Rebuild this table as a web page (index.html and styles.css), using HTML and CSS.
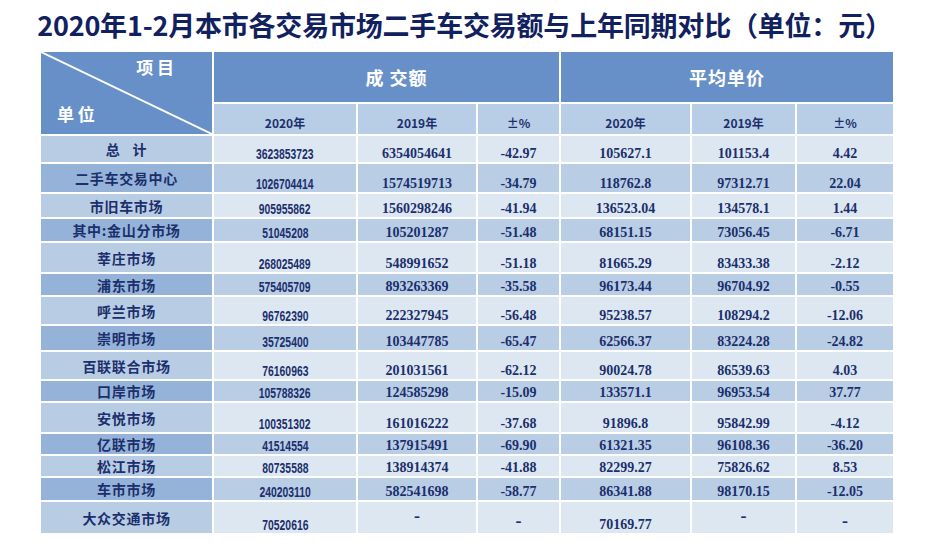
FILE: index.html
```html
<!DOCTYPE html>
<html lang="zh-CN">
<head>
<meta charset="utf-8">
<title>2020年1-2月本市各交易市场二手车交易额与上年同期对比</title>
<link rel="stylesheet" href="styles.css">
</head>
<body>
<h1 class="title">2020年1-2月本市各交易市场二手车交易额与上年同期对比（单位：元）</h1>
<div class="sheet">
  <div class="corner">
    <svg class="diag" viewBox="0 0 100 100" preserveAspectRatio="none"><line x1="0" y1="0" x2="100" y2="100" stroke="#ffffff" stroke-width="2" vector-effect="non-scaling-stroke"/></svg>
    <span class="c-top">项 目</span>
    <span class="c-bot">单 位</span>
  </div>
  <div class="hd hd-amt">成 交额</div>
  <div class="hd hd-avg">平均单价</div>
  <div class="sub">2020年</div>
  <div class="sub">2019年</div>
  <div class="sub">±%</div>
  <div class="sub">2020年</div>
  <div class="sub">2019年</div>
  <div class="sub">±%</div>

  <div class="row"><div class="lab wide">总 计</div><div class="c"><span class="amt">3623853723</span></div><div class="c">6354054641</div><div class="c">-42.97</div><div class="c">105627.1</div><div class="c">101153.4</div><div class="c">4.42</div></div>
  <div class="row alt"><div class="lab">二手车交易中心</div><div class="c"><span class="amt">1026704414</span></div><div class="c">1574519713</div><div class="c">-34.79</div><div class="c">118762.8</div><div class="c">97312.71</div><div class="c">22.04</div></div>
  <div class="row"><div class="lab">市旧车市场</div><div class="c"><span class="amt">905955862</span></div><div class="c">1560298246</div><div class="c">-41.94</div><div class="c">136523.04</div><div class="c">134578.1</div><div class="c">1.44</div></div>
  <div class="row alt"><div class="lab">其中:金山分市场</div><div class="c"><span class="amt">51045208</span></div><div class="c">105201287</div><div class="c">-51.48</div><div class="c">68151.15</div><div class="c">73056.45</div><div class="c">-6.71</div></div>
  <div class="row"><div class="lab">莘庄市场</div><div class="c"><span class="amt">268025489</span></div><div class="c">548991652</div><div class="c">-51.18</div><div class="c">81665.29</div><div class="c">83433.38</div><div class="c">-2.12</div></div>
  <div class="row alt"><div class="lab">浦东市场</div><div class="c"><span class="amt">575405709</span></div><div class="c">893263369</div><div class="c">-35.58</div><div class="c">96173.44</div><div class="c">96704.92</div><div class="c">-0.55</div></div>
  <div class="row"><div class="lab">呼兰市场</div><div class="c"><span class="amt">96762390</span></div><div class="c">222327945</div><div class="c">-56.48</div><div class="c">95238.57</div><div class="c">108294.2</div><div class="c">-12.06</div></div>
  <div class="row alt"><div class="lab">崇明市场</div><div class="c"><span class="amt">35725400</span></div><div class="c">103447785</div><div class="c">-65.47</div><div class="c">62566.37</div><div class="c">83224.28</div><div class="c">-24.82</div></div>
  <div class="row"><div class="lab">百联联合市场</div><div class="c"><span class="amt">76160963</span></div><div class="c">201031561</div><div class="c">-62.12</div><div class="c">90024.78</div><div class="c">86539.63</div><div class="c">4.03</div></div>
  <div class="row alt"><div class="lab">口岸市场</div><div class="c"><span class="amt">105788326</span></div><div class="c">124585298</div><div class="c">-15.09</div><div class="c">133571.1</div><div class="c">96953.54</div><div class="c">37.77</div></div>
  <div class="row"><div class="lab">安悦市场</div><div class="c"><span class="amt">100351302</span></div><div class="c">161016222</div><div class="c">-37.68</div><div class="c">91896.8</div><div class="c">95842.99</div><div class="c">-4.12</div></div>
  <div class="row alt"><div class="lab">亿联市场</div><div class="c"><span class="amt">41514554</span></div><div class="c">137915491</div><div class="c">-69.90</div><div class="c">61321.35</div><div class="c">96108.36</div><div class="c">-36.20</div></div>
  <div class="row"><div class="lab">松江市场</div><div class="c"><span class="amt">80735588</span></div><div class="c">138914374</div><div class="c">-41.88</div><div class="c">82299.27</div><div class="c">75826.62</div><div class="c">8.53</div></div>
  <div class="row alt"><div class="lab">车市市场</div><div class="c"><span class="amt">240203110</span></div><div class="c">582541698</div><div class="c">-58.77</div><div class="c">86341.88</div><div class="c">98170.15</div><div class="c">-12.05</div></div>
  <div class="row"><div class="lab">大众交通市场</div><div class="c"><span class="amt">70520616</span></div><div class="c dash hi">-</div><div class="c dash">-</div><div class="c">70169.77</div><div class="c dash hi">-</div><div class="c dash">-</div></div>
</div>
</body>
</html>
```

FILE: styles.css
```css
html, body {
  margin: 0;
  padding: 0;
  background: #ffffff;
}

body {
  width: 929px;
  height: 553px;
  overflow: hidden;
  font-family: "Noto Sans CJK SC", "Noto Sans", sans-serif;
  color: #1b2f6c;
}

.title {
  margin: 0;
  padding-top: 7px;
  height: 36px;
  line-height: 36px;
  font-size: 27px;
  font-weight: 700;
  letter-spacing: -0.2px;
  text-align: center;
  color: #112160;
  white-space: nowrap;
}

.sheet {
  margin: 9px 0 0 41px;
  width: 852px;
  display: grid;
  grid-template-columns: 171px 142px 118px 81px 129px 103px 96px;
  grid-template-rows: 50px 30px 26px 28px 23px 22px 29px 21px 27px 24px 27px 20px 29px 20px 20px 22px 31px;
  column-gap: 2px;
  row-gap: 2px;
}

.corner {
  grid-row: 1 / span 2;
  grid-column: 1;
  position: relative;
  background: #6890c8;
  display: flex;
  flex-direction: column;
  justify-content: space-between;
  color: #ffffff;
  font-weight: 700;
  font-size: 17px;
  line-height: 20px;
}

.diag {
  position: absolute;
  left: 0;
  top: 0;
  width: 100%;
  height: 100%;
}

.c-top {
  align-self: flex-end;
  margin: 5px 38px 0 0;
}

.c-bot {
  align-self: flex-start;
  margin: 0 0 10px 16px;
}

.hd {
  background: #6890c8;
  color: #ffffff;
  font-size: 18px;
  font-weight: 700;
  display: flex;
  align-items: center;
  justify-content: center;
  letter-spacing: 1px;
}

.hd-amt {
  grid-column: 2 / span 3;
  padding-left: 20px;
}

.hd-avg {
  grid-column: 5 / span 3;
}

.sub {
  background: #b8cde6;
  display: flex;
  align-items: center;
  justify-content: center;
  padding-top: 6px;
  box-sizing: border-box;
  font-size: 12px;
  font-weight: 700;
}

.row {
  display: contents;
}

.lab {
  background: #b8cce4;
  display: flex;
  align-items: center;
  justify-content: center;
  font-size: 14px;
  font-weight: 700;
  letter-spacing: 0.7px;
  white-space: nowrap;
}

.lab.wide {
  word-spacing: 8px;
}

.row.alt .lab {
  background: #95b3d8;
}

.c {
  background: #dde7f1;
  display: flex;
  align-items: flex-end;
  justify-content: center;
  font-family: "Liberation Serif", "Times New Roman", serif;
  font-weight: 700;
  font-size: 14px;
  line-height: 14px;
  padding-bottom: 1px;
  box-sizing: border-box;
  white-space: nowrap;
}

.row.alt .c {
  background: #b9cde5;
}

.amt {
  display: inline-block;
  font-family: "Liberation Sans", Arial, sans-serif;
  font-weight: 700;
  font-size: 15px;
  transform: scaleX(0.69);
}

.c.dash {
  font-size: 18px;
  padding-bottom: 5px;
}

.c.dash.hi {
  padding-bottom: 10px;
}
```
